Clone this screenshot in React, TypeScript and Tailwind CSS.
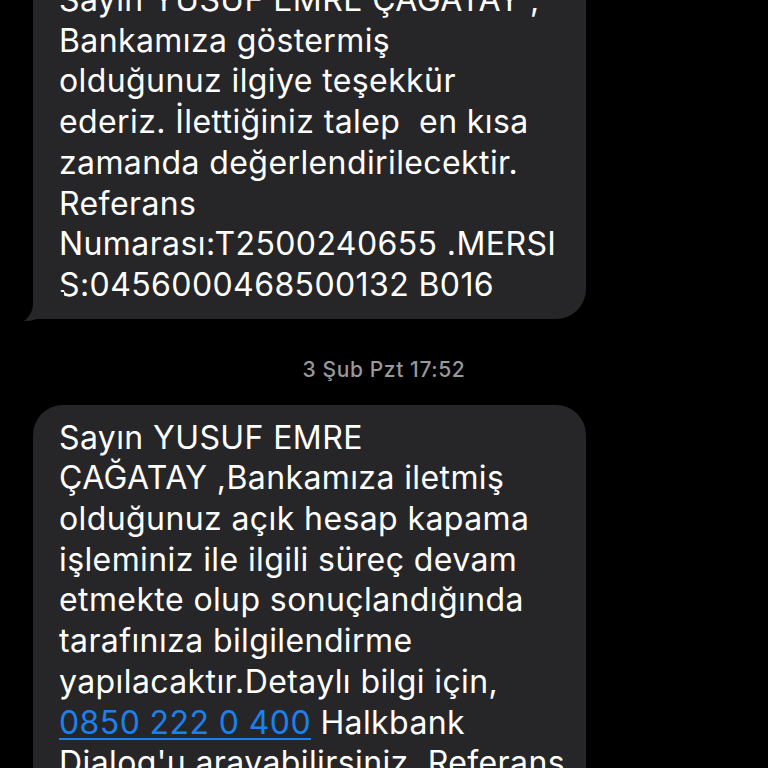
import React from "react";

const first = [
  "Sayın YUSUF EMRE ÇAĞATAY ,",
  "Bankamıza göstermiş",
  "olduğunuz ilgiye teşekkür",
  "ederiz. İlettiğiniz talep  en kısa",
  "zamanda değerlendirilecektir.",
  "Referans",
  "Numarası:T2500240655 .MERSI",
  "S:0456000468500132 B016",
];

const second = [
  "Sayın YUSUF EMRE",
  "ÇAĞATAY ,Bankamıza iletmiş",
  "olduğunuz açık hesap kapama",
  "işleminiz ile ilgili süreç devam",
  "etmekte olup sonuçlandığında",
  "tarafınıza bilgilendirme",
  "yapılacaktır.Detaylı bilgi için,",
];

function Tail() {
  return (
    <svg
      className="absolute left-[-9px] bottom-[-3px]"
      width="40"
      height="30"
      viewBox="0 0 40 30"
    >
      <path
        d="M9 0 L9 12 C9 19 5 25 0 29 C6 29.5 12 28 16 25 C19 26.5 23 27 27 27 L40 27 L40 0 Z"
        fill="#262628"
      />
    </svg>
  );
}

function Bubble({ children, tail }: { children: React.ReactNode; tail?: boolean }) {
  return (
    <div
      className={`relative ml-[33px] w-[553px] bg-[#262628] rounded-[30px] pl-[26px] pr-[10px] py-[13px] text-white text-[32px] tracking-[0.4px] leading-[40.7px] ${
        tail ? "rounded-bl-none" : ""
      }`}
    >
      {children}
      {tail && <Tail />}
    </div>
  );
}

export default function App() {
  return (
    <div
      className="h-[768px] w-[768px] bg-black overflow-hidden"
      style={{ fontFamily: "Inter, 'Noto Sans', sans-serif" }}
    >
      <div className="-mt-[33px]">
        <Bubble tail>
          {first.map((l) => (
            <div key={l} className="whitespace-pre">
              {l}
            </div>
          ))}
        </Bubble>

        <div className="h-[86px] flex items-center justify-center text-[21px] tracking-[0.6px] font-medium text-[#98989d] pt-[16px]">
          3 Şub Pzt 17:52
        </div>

        <Bubble>
          {second.map((l) => (
            <div key={l} className="whitespace-pre">
              {l}
            </div>
          ))}
          <div className="whitespace-pre">
            <span className="text-[#1a82f0] underline decoration-[2px] underline-offset-[4px]">
              0850 222 0 400
            </span>{" "}
            Halkbank
          </div>
          <div className="whitespace-pre">Dialog'u arayabilirsiniz. Referans</div>
          <div className="whitespace-pre">Numarası:T2500240655</div>
        </Bubble>
      </div>
    </div>
  );
}
